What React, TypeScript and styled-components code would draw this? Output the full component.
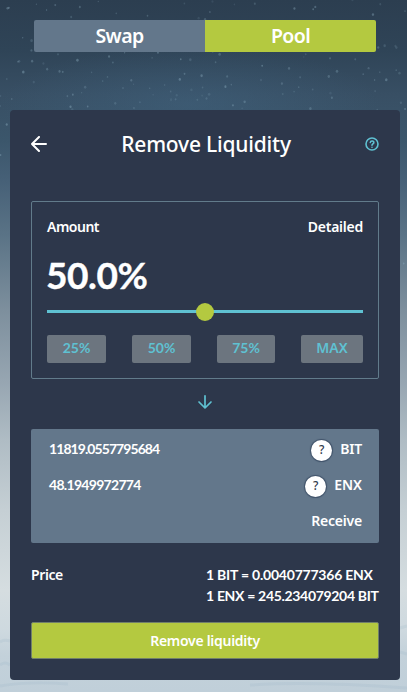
import React from "react";
import styled, { createGlobalStyle } from "styled-components";

const Global = createGlobalStyle`
  * { box-sizing: border-box; }
  body { margin: 0; overflow: hidden; font-family: "Noto Sans", sans-serif; color: #fff; }
  button { font: inherit; color: inherit; border: 0; padding: 0; margin: 0; }
`;

const Page = styled.div`
  position: relative;
  width: 407px;
  height: 692px;
  overflow: hidden;
  padding: 20px 7px 12px 10px;
  background: linear-gradient(180deg, #2c3e50 0, #2f4457 50px, #384f64 95px, #3b566b 140px, #466077 180px, #5a7386 235px, #7d8f9d 310px, #96a5b1 380px, #afbcc4 440px, #c5cfd4 510px, #d5dde0 590px, #ced9df 630px, #c3d1da 655px, #c0cfd9 692px);
`;

const Snow = styled.svg`
  position: absolute;
  inset: 0;
`;

const Tabs = styled.nav`
  position: relative;
  display: flex;
  width: 342px;
  height: 32px;
  margin: 0 0 58px 24px;
  border-radius: 2px;
  overflow: hidden;
`;

const Tab = styled.button<{ $active?: boolean }>`
  flex: 1;
  background: ${(p) => (p.$active ? "#b4c940" : "#63778b")};
  font-size: 19.5px;
  font-weight: 600;
  letter-spacing: -0.6px;
  line-height: 30px;
`;

const Card = styled.main`
  position: relative;
  width: 390px;
  height: 570px;
  padding: 20px 21px 21px;
  border-radius: 4px;
  background: #2d374b;
`;

const Header = styled.header`
  display: flex;
  align-items: center;
  justify-content: space-between;
  height: 28px;
  margin-bottom: 43px;
`;

const Text = styled.span<{ $size?: number; $track?: number; $weight?: number; $lato?: boolean }>`
  display: inline-block;
  white-space: nowrap;
  font-family: ${(p) => (p.$lato ? '"Lato"' : '"Noto Sans"')}, sans-serif;
  font-size: ${(p) => p.$size ?? 14}px;
  font-weight: ${(p) => p.$weight ?? 600};
  letter-spacing: ${(p) => p.$track ?? 0}px;
  line-height: 20px;
`;

const AmountBox = styled.section`
  height: 178px;
  padding: 15px;
  border: 1px solid #627b8b;
  border-radius: 2px;
`;

const Row = styled.div`
  display: flex;
  align-items: center;
  justify-content: space-between;
  height: 20px;
`;

const Percent = styled.div`
  height: 66px;
  margin-left: -1px;
  font: 700 37px/75px Lato, sans-serif;
  letter-spacing: -0.4px;
  -webkit-text-stroke: 0.4px #fff;
`;

const Slider = styled.div`
  display: flex;
  align-items: center;
  justify-content: center;
  height: 18px;
  margin-bottom: 14px;
  background: linear-gradient(#5fc1d2, #5fc1d2) 0 7px / 100% 3px no-repeat;
`;

const Thumb = styled.div`
  width: 18px;
  height: 18px;
  border-radius: 50%;
  background: #b4c940;
`;

const Presets = styled.div`
  display: flex;
  justify-content: space-between;
`;

const Preset = styled.button<{ $width: number }>`
  width: ${(p) => p.$width}px;
  height: 28px;
  padding-bottom: 2px;
  border-radius: 2px;
  background: #6c757f;
  color: #5fc1d2;
  line-height: 0;
`;

const ArrowRow = styled.div`
  display: flex;
  align-items: center;
  justify-content: center;
  height: 46px;
  margin-bottom: 4px;
`;

const Receive = styled.section`
  display: flex;
  flex-direction: column;
  gap: 16px;
  height: 114px;
  padding: 10px 17px 0 18px;
  margin-bottom: 22px;
  border-radius: 2px;
  background: #63778b;
`;

const Token = styled.div`
  display: flex;
  align-items: center;
  gap: 8px;
`;

const Badge = styled.span`
  display: grid;
  place-items: center;
  width: 21px;
  height: 21px;
  margin-top: 2px;
  border-radius: 50%;
  background: #fff;
  color: #303b4c;
  box-shadow: 0 0 1px 1px #40536a;
  font: 500 12px/20px "Noto Sans", sans-serif;
`;

const Price = styled.section`
  display: flex;
  justify-content: space-between;
  height: 57px;
`;

const Rates = styled.div`
  display: flex;
  flex-direction: column;
  gap: 1px;
  width: 173px;
`;

const Submit = styled.button`
  width: 100%;
  height: 37px;
  padding-bottom: 2px;
  border: 1px solid #71806b;
  border-radius: 2px;
  background: #b4c940;
`;

const flakes = Array.from({ length: 230 }, (_, i) => {
  const noise = (n: number) => {
    const v = Math.sin(n * 12.9898) * 43758.5453;
    return v - Math.floor(v);
  };
  const band = i < 170 ? 125 : 560;
  return {
    x: noise(i + 1) * 407,
    y: noise(i + 401) * band,
    r: 0.6 + noise(i + 801) * 0.7,
    opacity: 0.12 + noise(i + 1201) * 0.3,
  };
});

function Backdrop() {
  return (
    <Snow width="407" height="692" aria-hidden="true">
      <defs>
        <radialGradient id="glow"><stop stopColor="#426784" stopOpacity=".42" /><stop offset="1" stopColor="#426784" stopOpacity="0" /></radialGradient>
      </defs>
      <ellipse cx="190" cy="104" rx="190" ry="58" fill="url(#glow)" />
      {flakes.map((f, i) => <ellipse key={i} cx={f.x} cy={f.y} rx={f.r} ry={f.r * 1.2} fill="#91b2c4" opacity={f.opacity} />)}
      <path d="M0 642q4-3 10-1M0 665q5-4 10 0M400 628l7-2M400 652l7 2M0 686q28-5 68-2M250 685q60-4 157 3" fill="none" stroke="#8faec0" strokeWidth="3" opacity=".16" />
    </Snow>
  );
}

function Arrow({ down = false }: { down?: boolean }) {
  return (
    <svg width="16" height="16" viewBox="0 0 16 16" fill="none" stroke={down ? "#5fc1d2" : "#fff"} strokeWidth={down ? 1.7 : 2} strokeLinecap="round" strokeLinejoin="round">
      <path d={down ? "M8 1.8v12M2 8l6 6 6-6" : "M15 8H1M8 1 1 8l7 7"} />
    </svg>
  );
}

function HelpIcon() {
  return (
    <svg width="14" height="14" viewBox="0 0 14 14" fill="none" stroke="#5fc1d2" strokeWidth="1.6" strokeLinecap="round">
      <circle cx="7" cy="7" r="6" />
      <path d="M5.3 5.5c.2-2.1 3.7-1.9 3.5.1C8.7 6.9 7 6.8 7 8.2M7 10.2v.1" />
    </svg>
  );
}

const presets = [{ label: "25%", width: 59 }, { label: "50%", width: 59 }, { label: "75%", width: 58 }, { label: "MAX", width: 62 }];
const tokens = [{ amount: "11819.0557795684", name: "BIT", track: -0.93, nameTrack: -0.2 }, { amount: "48.1949972774", name: "ENX", track: -0.7, nameTrack: 0 }];

export default function App() {
  return (
    <>
      <Global />
      <Page>
        <Backdrop />
        <Tabs><Tab>Swap</Tab><Tab $active>Pool</Tab></Tabs>
        <Card>
          <Header><Arrow /><Text $size={21} $weight={500} $track={-0.2}>Remove Liquidity</Text><HelpIcon /></Header>
          <AmountBox>
            <Row><Text $track={-0.5}>Amount</Text><Text $track={-0.25}>Detailed</Text></Row>
            <Percent>50.0%</Percent>
            <Slider><Thumb /></Slider>
            <Presets>
              {presets.map((p) => <Preset key={p.label} $width={p.width}><Text $lato={p.label !== "MAX"} $weight={p.label === "MAX" ? 600 : 700}>{p.label}</Text></Preset>)}
            </Presets>
          </AmountBox>
          <ArrowRow><Arrow down /></ArrowRow>
          <Receive>
            {tokens.map((t) => (
              <Row key={t.name}><Text $lato $weight={700} $track={t.track}>{t.amount}</Text><Token><Badge>?</Badge><Text $track={t.nameTrack}>{t.name}</Text></Token></Row>
            ))}
            <Row><span /><Text $track={-0.2}>Receive</Text></Row>
          </Receive>
          <Price>
            <Text $track={-0.4}>Price</Text>
            <Rates><Text $lato $weight={700} $track={-0.22}>1 BIT = 0.0040777366 ENX</Text><Text $lato $weight={700} $track={-0.32}>1 ENX = 245.234079204 BIT</Text></Rates>
          </Price>
          <Submit><Text $track={-0.28}>Remove liquidity</Text></Submit>
        </Card>
      </Page>
    </>
  );
}
